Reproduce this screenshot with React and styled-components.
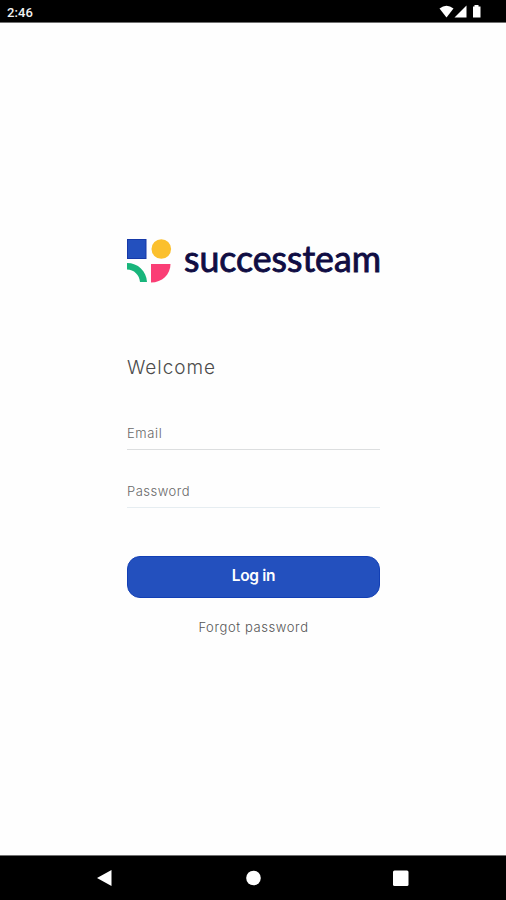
import React from "react";
import styled, { createGlobalStyle } from "styled-components";

const GlobalStyle = createGlobalStyle`
  * { box-sizing: border-box; }
  body { margin: 0; background: #fff; }
`;

const Screen = styled.div`
  width: 506px;
  height: 900px;
  display: flex;
  flex-direction: column;
  overflow: hidden;
  background: #fefefe;
  font-family: Inter, "Liberation Sans", sans-serif;
`;

const StatusBar = styled.header`
  height: 23px;
  flex: none;
  display: flex;
  align-items: center;
  justify-content: space-between;
  padding: 0 23px 0 7px;
  background: #000;
  border-bottom: 1px solid #707070;
`;

const Clock = styled.time`
  color: #f2f2f2;
  font: 500 13px/22px Roboto, sans-serif;
  letter-spacing: 0.1px;
  padding-top: 3px;
`;

const Drawing = styled.svg`
  display: block;
  flex: none;
  overflow: visible;
`;

const Main = styled.main`
  flex: 1;
  width: 253px;
  margin-left: 127px;
  padding-top: 215px;
  display: flex;
  flex-direction: column;
`;

const Welcome = styled.h1`
  margin: 70px 0 0;
  color: #4c4c4c;
  font-size: 19px;
  font-weight: 300;
  line-height: 28px;
  letter-spacing: 0.95px;
`;

const Field = styled.label`
  height: 58px;
  display: flex;
  align-items: flex-end;
  padding-bottom: 6px;
  border-bottom: 1px solid ${(p) => p.$line};
  color: #686868;
  font-size: 13px;
  font-weight: 300;
  line-height: 20px;
  letter-spacing: ${(p) => p.$spacing};
`;

const Fields = styled.div`
  padding-top: 10px;
`;

const LoginButton = styled.button`
  height: 42px;
  margin: 48px 0 0;
  padding: 0 0 2px;
  border: 1px solid #123fb5;
  border-radius: 13px;
  background: #2350be;
  color: #fff;
  font: 600 15.5px/20px Inter, sans-serif;
  letter-spacing: -0.3px;
`;

const ForgotLink = styled.a`
  align-self: center;
  margin-top: 19px;
  color: #555;
  font-size: 13px;
  font-weight: 300;
  line-height: 20px;
  letter-spacing: 0.6px;
`;

const NavBar = styled.nav`
  height: 45px;
  flex: none;
  background: #000;
  border-top: 1px solid #707070;
`;

function Logo() {
  return (
    <Drawing width="256" height="46" viewBox="0 0 256 46" role="img" aria-label="successteam">
      <rect x="0.5" y="1.5" width="18.5" height="19" fill="#2350be" stroke="#1639a8" />
      <circle cx="34.3" cy="11" r="9.8" fill="#fbc02d" />
      <path d="M0 25C11 25 19.5 33 20 44H13C12.5 37 7 31.500 0 31.500Z" fill="#18b57b" />
      <path d="M24 26H43.500C43.500 36.500 35 44.500 24 44.500Z" fill="#fa3e75" />
      <text
        x="57"
        y="34"
        textLength="197"
        lengthAdjust="spacingAndGlyphs"
        fontFamily="Lato, sans-serif"
        fontSize="36"
        fontWeight="400"
        fill="#100d43"
        stroke="#100d43"
        strokeWidth="0.9"
      >
        successteam
      </text>
    </Drawing>
  );
}

function StatusIcons() {
  return (
    <Drawing width="44" height="22" viewBox="0 0 44 22" fill="#fff">
      <path d="M0.500 8.500Q7.500 3 14.500 8.500L7.500 17.500Z" />
      <path d="M27.500 5.500V17.500H15.500Z" />
      <path d="M34 6.500H35.500V5H39.500V6.500H41.500V17.500H34Z" />
    </Drawing>
  );
}

export default function App() {
  return (
    <>
      <GlobalStyle />
      <Screen>
        <StatusBar>
          <Clock>2:46</Clock>
          <StatusIcons />
        </StatusBar>
        <Main>
          <Logo />
          <Welcome>Welcome</Welcome>
          <Fields>
            <Field $line="#dcdedf" $spacing="0.6px">Email</Field>
            <Field $line="#e6edf1" $spacing="0.5px">Password</Field>
          </Fields>
          <LoginButton>Log in</LoginButton>
          <ForgotLink>Forgot password</ForgotLink>
        </Main>
        <NavBar>
          <Drawing width="506" height="44" viewBox="0 0 506 44" fill="#fff">
            <path d="M97 22L111.500 14V30Z" />
            <circle cx="253.500" cy="22" r="7.300" />
            <rect x="393" y="14.500" width="15.500" height="15.500" rx="1.500" />
          </Drawing>
        </NavBar>
      </Screen>
    </>
  );
}
